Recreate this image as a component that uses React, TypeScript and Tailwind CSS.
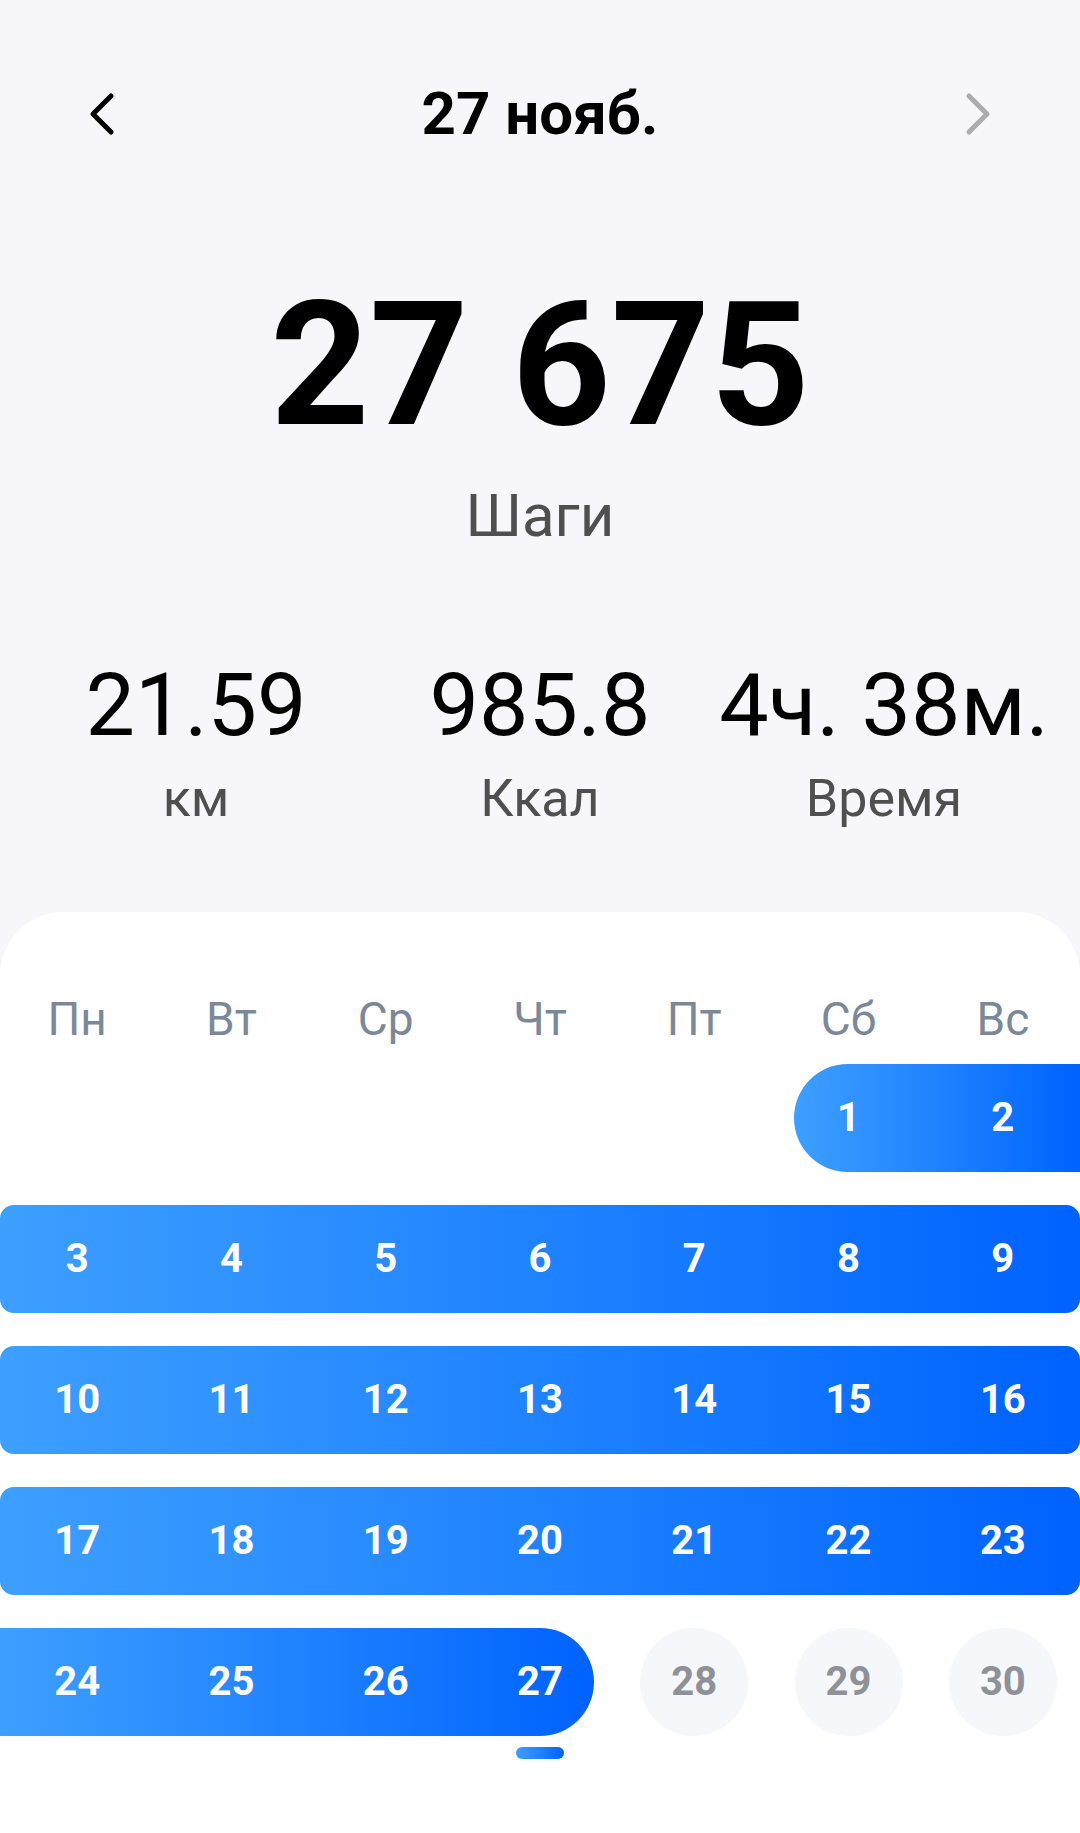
import React from "react";

const FONT = { fontFamily: "Roboto, 'Noto Sans', 'Liberation Sans', sans-serif" };

function ChevronLeft() {
  return (
    <svg width="28" height="44" viewBox="0 0 28 44" fill="none">
      <path d="M23 4 L5 22 L23 40" stroke="#000" strokeWidth="5" strokeLinecap="round" strokeLinejoin="round" />
    </svg>
  );
}

function ChevronRight() {
  return (
    <svg width="28" height="44" viewBox="0 0 28 44" fill="none">
      <path d="M5 4 L23 22 L5 40" stroke="#ababb1" strokeWidth="5" strokeLinecap="round" strokeLinejoin="round" />
    </svg>
  );
}

const days = ["Пн", "Вт", "Ср", "Чт", "Пт", "Сб", "Вс"];

function Cell({ n, className = "" }: { n: number; className?: string }) {
  return (
    <div className={`flex h-[108px] w-[154.2857px] flex-none items-center justify-center text-[40px] font-bold text-white ${className}`}>
      {n}
    </div>
  );
}

function FullWeek({ start }: { start: number }) {
  return (
    <div className="flex h-[108px] w-full rounded-[14px] bg-linear-to-r from-[#3d9fff] to-[#0062ff]">
      {Array.from({ length: 7 }, (_, i) => (
        <Cell key={i} n={start + i} />
      ))}
    </div>
  );
}

export default function App() {
  return (
    <div className="flex min-h-[1833px] w-[1080px] flex-col bg-[#f7f7fb]" style={FONT}>
      {/* Header */}
      <div className="mt-[84px] flex h-[60px] items-center justify-between px-[88px]">
        <ChevronLeft />
        <div className="text-[60px] font-bold leading-[60px] text-black">27 нояб.</div>
        <ChevronRight />
      </div>

      {/* Big number */}
      <div className="mt-[135px] text-center text-[173px] font-bold leading-[173px] text-black">27 675</div>
      <div className="mt-[34px] text-center text-[60px] leading-[60px] text-[#4f4f4f]">Шаги</div>

      {/* Stats */}
      <div className="mt-[115px] grid grid-cols-3 px-[24px]">
        {[
          ["21.59", "км"],
          ["985.8", "Ккал"],
          ["4ч. 38м.", "Время"],
        ].map(([v, l]) => (
          <div key={l} className="flex flex-col items-center">
            <div className="whitespace-nowrap text-[88px] leading-[88px] text-black">{v}</div>
            <div className="mt-[24px] text-[52px] leading-[52px] text-[#4f4f4f]">{l}</div>
          </div>
        ))}
      </div>

      {/* Calendar card */}
      <div className="mt-[87px] flex-1 rounded-t-[64px] bg-white pt-[84px]">
        <div className="grid grid-cols-7">
          {days.map((d) => (
            <div key={d} className="text-center text-[46px] leading-[46px] text-[#7c8898]">
              {d}
            </div>
          ))}
        </div>

        <div className="mt-[22px] flex flex-col gap-[33px]">
          {/* Week 1 */}
          <div className="grid h-[108px] grid-cols-7">
            <div className="col-span-2 col-start-6 ml-[23px] flex rounded-l-full rounded-r-[14px] bg-linear-to-r from-[#3d9fff] to-[#0062ff]">
              <Cell n={1} className="-ml-[23px]" />
              <Cell n={2} />
            </div>
          </div>
          <FullWeek start={3} />
          <FullWeek start={10} />
          <FullWeek start={17} />
          {/* Week 5 */}
          <div className="grid h-[108px] grid-cols-7">
            <div className="col-span-4 mr-[23px] flex rounded-l-[14px] rounded-r-full bg-linear-to-r from-[#3d9fff] to-[#0062ff]">
              <Cell n={24} />
              <Cell n={25} />
              <Cell n={26} />
              <Cell n={27} className="-mr-[23px]" />
            </div>
            {[28, 29, 30].map((n) => (
              <div key={n} className="flex items-center justify-center">
                <div className="flex size-[108px] items-center justify-center rounded-full bg-[#f6f7fb] text-[40px] font-bold text-[#8f9198]">
                  {n}
                </div>
              </div>
            ))}
          </div>
        </div>

        {/* Indicator */}
        <div className="grid grid-cols-7">
          <div className="col-start-4 flex justify-center pt-[11px]">
            <div className="h-[12px] w-[48px] rounded-full bg-linear-to-r from-[#3d9fff] to-[#0062ff]" />
          </div>
        </div>
      </div>
    </div>
  );
}
